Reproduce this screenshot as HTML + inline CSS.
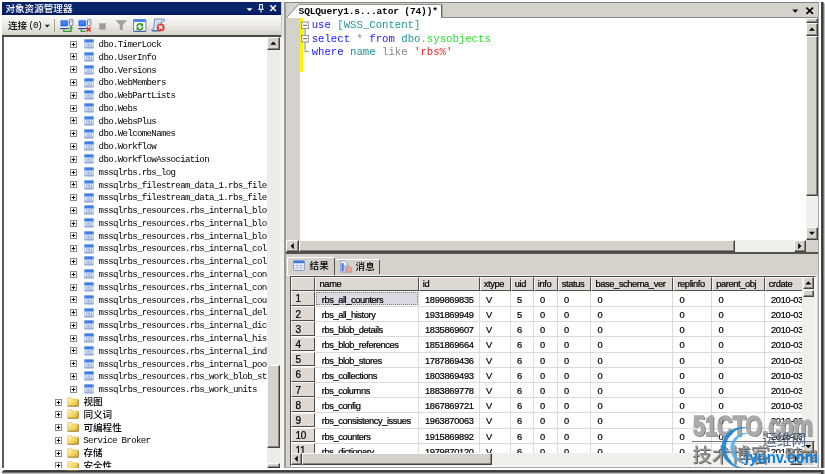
<!DOCTYPE html>
<html lang="zh-CN"><head><meta charset="utf-8"><title>SSMS</title><style>
html,body{margin:0;padding:0;background:#fff;}
#r{filter:blur(0.35px);position:relative;width:825px;height:474px;overflow:hidden;background:#fff;font-family:"Liberation Sans","Noto Sans CJK SC",sans-serif;}
#r div,#r svg,#r span.t{position:absolute;}
#r span.t{white-space:pre;line-height:1;}
.cjk{font-family:"Liberation Sans","Noto Sans CJK SC",sans-serif;font-weight:500;font-size:9.6px;line-height:1.2 !important;}
.mono{font-family:"Liberation Mono",monospace;}
.tree{font-family:"Liberation Mono",monospace;font-size:9.1px;letter-spacing:-0.66px;color:#000;line-height:12px !important;}
.tab{font-family:"Liberation Mono",monospace;font-weight:bold;font-size:9.6px;letter-spacing:-0.19px;color:#000;line-height:11px !important;}
.code{font-family:"Liberation Mono",monospace;font-size:10.67px;color:#000;line-height:13px !important;}
.grid{font-family:"Liberation Sans",sans-serif;font-size:9.3px;color:#000;-webkit-text-stroke:0.22px #000;line-height:11px !important;letter-spacing:-0.1px;}
.wm1{font-family:"Liberation Sans",sans-serif;font-weight:bold;font-size:29.8px;color:#a2a2a2;transform:scaleX(.725);transform-origin:0 0;-webkit-text-stroke:1.7px #a2a2a2;text-shadow:1.6px 1.2px 0 #4a4a4a;opacity:.9;}
.wm2{font-family:"Liberation Sans","Noto Sans CJK SC",sans-serif;font-size:19.5px;color:#8c8c8c;text-shadow:1px 1px 0 #555;opacity:.9;line-height:1.2 !important;}
.wm3{font-family:"Liberation Sans",sans-serif;font-weight:bold;font-size:14.5px;color:#8c8c8c;text-shadow:1px 1px 0 #555;opacity:.85;}
.wm4{font-family:"Liberation Sans","Noto Sans CJK SC",sans-serif;font-size:14.8px;color:#46607f;opacity:.9;line-height:1.2 !important;}
.wm5{font-family:"Liberation Sans",sans-serif;font-weight:bold;font-size:16.4px;color:#0a80e2;transform:scaleX(.915);transform-origin:0 0;}
</style></head><body><div id="r">
<div style="left:2px;top:2px;width:817px;height:466px;background:#d5d2cb;"></div>
<div style="left:2px;top:469.6px;width:823px;height:4.4px;background:linear-gradient(#5a5a5a 0,#2c2c2c 28%,#4f4f4f 52%,#a0a0a0 76%,#dcdcdc 100%);border-radius:3px 0 0 0;"></div>
<div style="left:821.4px;top:2.4px;width:3.6px;height:471.6px;background:linear-gradient(90deg,#5a5a5a 0,#2c2c2c 28%,#4f4f4f 52%,#a0a0a0 76%,#dcdcdc 100%);border-radius:0 3px 0 0;"></div>
<div style="left:2px;top:2px;width:278.6px;height:12.5px;background:linear-gradient(#0a246a 0,#0a246a 75%,#02135c 100%);"></div>
<span class="t cjk" style="left:5.4px;top:3.1px;color:#fff;">对象资源管理器</span>
<svg style="left:244px;top:3px" width="36" height="11" viewBox="0 0 36 11"><path d="M2.5 5.2h6l-3 3z" fill="#fff"/><path d="M15.2 1.5h3.6M15.6 1.5v4.6M18.4 1.5v4.6M14.2 6.3h5.6M17 6.3v3.4" stroke="#fff" stroke-width="1" fill="none"/><path d="M26.3 2.2l5.6 5.8M31.9 2.2l-5.6 5.8" stroke="#fff" stroke-width="1.5" fill="none"/></svg>
<div style="left:2px;top:14.5px;width:278.6px;height:21px;background:linear-gradient(#ffffff 0,#f6f4f1 18%,#ebe9e4 50%,#dcd9d2 82%,#d2cec6 100%);"></div>
<div style="left:2px;top:35.1px;width:278.6px;height:1.5px;background:#484848;"></div>
<span class="t cjk" style="left:8px;top:19.6px;color:#000;">连接</span>
<span class="t mono" style="left:28.5px;top:21.6px;font-size:9px;letter-spacing:-1px;color:#000;">(0)</span>
<svg style="left:44px;top:24px" width="7" height="5" viewBox="0 0 7 5"><path d="M0.7 0.8h5.2l-2.6 2.8z" fill="#222"/></svg>
<div style="left:54px;top:19px;width:1px;height:13px;background:#a7a398;"></div>
<svg style="left:59.5px;top:19px" width="14" height="14" viewBox="0 0 14 14"><rect x="0.5" y="1.2" width="7.6" height="6.4" rx="0.8" fill="#2a6df0" stroke="#9fb6e6" stroke-width="0.5"/><rect x="2" y="2.4" width="4" height="3" fill="#4f8dff" opacity=".8"/><path d="M0.2 7.7h8.2l0.4 1.3h-9z" fill="#f4f2dc"/><path d="M0 9h8.8v1.1h-8.8z" fill="#2a4390"/><rect x="9.5" y="0.4" width="3.4" height="6.2" rx="0.7" fill="#f2f5fb" stroke="#59648a" stroke-width="0.8"/><path d="M10.4 2h1.6M10.4 3.4h1.6" stroke="#8a93b0" stroke-width="0.6"/><path d="M3.8 10.2v2.2h7.3V9" fill="none" stroke="#2f9d2f" stroke-width="1.3"/><path d="M8.9 9.5l2.2-2.7 2.2 2.7z" fill="#2f9d2f"/></svg>
<svg style="left:78.4px;top:19px" width="14" height="14" viewBox="0 0 14 14"><rect x="0.5" y="1.2" width="7.6" height="6.4" rx="0.8" fill="#2a6df0" stroke="#9fb6e6" stroke-width="0.5"/><rect x="2" y="2.4" width="4" height="3" fill="#4f8dff" opacity=".8"/><path d="M0.2 7.7h8.2l0.4 1.3h-9z" fill="#f4f2dc"/><path d="M0 9h8.8v1.1h-8.8z" fill="#2a4390"/><rect x="9.5" y="0.4" width="3.4" height="6.2" rx="0.7" fill="#f2f5fb" stroke="#59648a" stroke-width="0.8"/><path d="M10.4 2h1.6M10.4 3.4h1.6" stroke="#8a93b0" stroke-width="0.6"/><path d="M3.2 10.2v2.2h4.2" fill="none" stroke="#2f9d2f" stroke-width="1.3"/><path d="M8.6 8.2l4 4.2M12.6 8.2l-4 4.2" stroke="#f02a20" stroke-width="1.6"/></svg>
<div style="left:99.3px;top:22.8px;width:6.8px;height:6.8px;background:#9c9a94;border:0.6px solid #b7b5ae;box-sizing:border-box;"></div>
<svg style="left:115px;top:20px" width="13" height="11" viewBox="0 0 13 11"><path d="M0.4 0.3h11.8l-4.4 4.6v5.2h-3V4.9z" fill="#a3a19b"/></svg>
<svg style="left:133px;top:19px" width="14" height="13" viewBox="0 0 14 13"><rect x="0.5" y="0.5" width="12.4" height="11.8" rx="0.6" fill="#fbfdff" stroke="#5677bd" stroke-width="0.9"/><rect x="0.9" y="0.8" width="11.6" height="2.2" fill="#4a84ea"/><path d="M0.5 12.3h12.4" stroke="#3a5690" stroke-width="0.9"/><path d="M3.9 7.6a2.9 2.9 0 0 1 4.9-2" stroke="#2f9420" stroke-width="1.5" fill="none"/><path d="M10.1 4.1v3.1h-3.1z" fill="#2f9420"/><path d="M9.7 7.9a2.9 2.9 0 0 1-4.9 2" stroke="#2f9420" stroke-width="1.5" fill="none"/><path d="M3.5 11.4v-3.1h3.1z" fill="#2f9420"/></svg>
<svg style="left:151px;top:18px" width="15" height="14" viewBox="0 0 15 14"><path d="M3.6 1.1h8.8c1.7 0 1.7 2.2 0 2.2h-1.9l-0.9 8.4c-.1 1-.6 1.5-1.6 1.5h-6.2c-1.6 0-1.6-2.2 0-2.2h1z" fill="#dde7f6" stroke="#6681b6" stroke-width="0.9"/><path d="M1.2 12.6h6.4" stroke="#3f5f99" stroke-width="0.9"/><path d="M5 4.4h3.6M4.8 6h3.6M4.6 7.6h2.6" stroke="#a9bfe4" stroke-width="0.6"/><circle cx="9.7" cy="9.4" r="3.9" fill="#dc3a3c"/><circle cx="8.9" cy="8.4" r="1.8" fill="#ee7a78" opacity=".55"/><path d="M8.1 7.8l3.2 3.2M11.3 7.8l-3.2 3.2" stroke="#fff" stroke-width="1.3"/></svg>
<div style="left:2px;top:36.7px;width:279px;height:431.3px;background:#fff;"></div>
<div style="left:2px;top:36.7px;width:1.6px;height:431.3px;background:#5a5a5a;"></div>
<div style="left:267px;top:37px;width:12.6px;height:431px;background:#eeece8;"></div>
<div style="left:267.4px;top:37px;width:12.2px;height:12.8px;background:#d5d2cb;box-sizing:border-box;border:1px solid;border-color:#fbfaf8 #424242 #424242 #fbfaf8;box-shadow:inset -1px -1px 0 #8a8780;"></div>
<svg style="left:0;top:0" width="825" height="474"><path d="M270.3 44.8h6l-3-3.2z" fill="#000"/></svg>
<div style="left:267.4px;top:365.4px;width:12.2px;height:82.2px;background:#d5d2cb;box-sizing:border-box;border:1px solid;border-color:#fbfaf8 #424242 #424242 #fbfaf8;box-shadow:inset -1px -1px 0 #8a8780;"></div>
<div style="left:267.4px;top:463px;width:12.2px;height:5px;background:#d5d2cb;box-sizing:border-box;border:1px solid;border-color:#fbfaf8 #424242 #424242 #fbfaf8;box-shadow:inset -1px -1px 0 #8a8780;"></div>
<div style="left:279.6px;top:37px;width:4.7px;height:431px;background:#f4f2ef;"></div>
<div style="left:280.6px;top:2px;width:3.7px;height:35px;background:#c9c6bf;"></div>
<div style="left:282.2px;top:2px;width:2px;height:35px;background:#eceae6;"></div>
<svg style="left:69px;top:40px" width="9" height="9" viewBox="0 0 9 9"><rect x="1.5" y="1.5" width="6" height="6" fill="#fff" stroke="#8c8c8c" stroke-width="1"/><path d="M2.7 4.5h3.6M4.5 2.7v3.6" stroke="#000" stroke-width="1"/></svg>
<svg style="left:83.5px;top:39.2px" width="10" height="10" viewBox="0 0 10 10"><rect x="0.3" y="0.3" width="9.4" height="9" rx="0.9" fill="#e4ecf9" stroke="#86a6e4" stroke-width="0.6"/><path d="M0.5 1.2c0-.4.3-.7.7-.7h7.6c.4 0 .7.3.7.7v1.9h-9z" fill="#3f7fe8"/><path d="M0.6 3.1h8.8v0.8h-8.8z" fill="#7fa8ee"/><path d="M2.7 4.2v3.4M4.3 4.2v3.4M5.9 4.2v3.4M7.5 4.2v3.4" stroke="#8fa6d8" stroke-width="0.8"/><rect x="0.6" y="7.5" width="8.8" height="1.6" fill="#93a3c4" opacity=".8"/></svg>
<span class="t tree" style="left:98.6px;top:39.0px;">dbo.TimerLock</span>
<svg style="left:69px;top:52px" width="9" height="9" viewBox="0 0 9 9"><rect x="1.5" y="1.5" width="6" height="6" fill="#fff" stroke="#8c8c8c" stroke-width="1"/><path d="M2.7 4.5h3.6M4.5 2.7v3.6" stroke="#000" stroke-width="1"/></svg>
<svg style="left:83.5px;top:51.98px" width="10" height="10" viewBox="0 0 10 10"><rect x="0.3" y="0.3" width="9.4" height="9" rx="0.9" fill="#e4ecf9" stroke="#86a6e4" stroke-width="0.6"/><path d="M0.5 1.2c0-.4.3-.7.7-.7h7.6c.4 0 .7.3.7.7v1.9h-9z" fill="#3f7fe8"/><path d="M0.6 3.1h8.8v0.8h-8.8z" fill="#7fa8ee"/><path d="M2.7 4.2v3.4M4.3 4.2v3.4M5.9 4.2v3.4M7.5 4.2v3.4" stroke="#8fa6d8" stroke-width="0.8"/><rect x="0.6" y="7.5" width="8.8" height="1.6" fill="#93a3c4" opacity=".8"/></svg>
<span class="t tree" style="left:98.6px;top:51.78px;">dbo.UserInfo</span>
<svg style="left:69px;top:65px" width="9" height="9" viewBox="0 0 9 9"><rect x="1.5" y="1.5" width="6" height="6" fill="#fff" stroke="#8c8c8c" stroke-width="1"/><path d="M2.7 4.5h3.6M4.5 2.7v3.6" stroke="#000" stroke-width="1"/></svg>
<svg style="left:83.5px;top:64.76px" width="10" height="10" viewBox="0 0 10 10"><rect x="0.3" y="0.3" width="9.4" height="9" rx="0.9" fill="#e4ecf9" stroke="#86a6e4" stroke-width="0.6"/><path d="M0.5 1.2c0-.4.3-.7.7-.7h7.6c.4 0 .7.3.7.7v1.9h-9z" fill="#3f7fe8"/><path d="M0.6 3.1h8.8v0.8h-8.8z" fill="#7fa8ee"/><path d="M2.7 4.2v3.4M4.3 4.2v3.4M5.9 4.2v3.4M7.5 4.2v3.4" stroke="#8fa6d8" stroke-width="0.8"/><rect x="0.6" y="7.5" width="8.8" height="1.6" fill="#93a3c4" opacity=".8"/></svg>
<span class="t tree" style="left:98.6px;top:64.56px;">dbo.Versions</span>
<svg style="left:69px;top:78px" width="9" height="9" viewBox="0 0 9 9"><rect x="1.5" y="1.5" width="6" height="6" fill="#fff" stroke="#8c8c8c" stroke-width="1"/><path d="M2.7 4.5h3.6M4.5 2.7v3.6" stroke="#000" stroke-width="1"/></svg>
<svg style="left:83.5px;top:77.54px" width="10" height="10" viewBox="0 0 10 10"><rect x="0.3" y="0.3" width="9.4" height="9" rx="0.9" fill="#e4ecf9" stroke="#86a6e4" stroke-width="0.6"/><path d="M0.5 1.2c0-.4.3-.7.7-.7h7.6c.4 0 .7.3.7.7v1.9h-9z" fill="#3f7fe8"/><path d="M0.6 3.1h8.8v0.8h-8.8z" fill="#7fa8ee"/><path d="M2.7 4.2v3.4M4.3 4.2v3.4M5.9 4.2v3.4M7.5 4.2v3.4" stroke="#8fa6d8" stroke-width="0.8"/><rect x="0.6" y="7.5" width="8.8" height="1.6" fill="#93a3c4" opacity=".8"/></svg>
<span class="t tree" style="left:98.6px;top:77.34px;">dbo.WebMembers</span>
<svg style="left:69px;top:91px" width="9" height="9" viewBox="0 0 9 9"><rect x="1.5" y="1.5" width="6" height="6" fill="#fff" stroke="#8c8c8c" stroke-width="1"/><path d="M2.7 4.5h3.6M4.5 2.7v3.6" stroke="#000" stroke-width="1"/></svg>
<svg style="left:83.5px;top:90.32px" width="10" height="10" viewBox="0 0 10 10"><rect x="0.3" y="0.3" width="9.4" height="9" rx="0.9" fill="#e4ecf9" stroke="#86a6e4" stroke-width="0.6"/><path d="M0.5 1.2c0-.4.3-.7.7-.7h7.6c.4 0 .7.3.7.7v1.9h-9z" fill="#3f7fe8"/><path d="M0.6 3.1h8.8v0.8h-8.8z" fill="#7fa8ee"/><path d="M2.7 4.2v3.4M4.3 4.2v3.4M5.9 4.2v3.4M7.5 4.2v3.4" stroke="#8fa6d8" stroke-width="0.8"/><rect x="0.6" y="7.5" width="8.8" height="1.6" fill="#93a3c4" opacity=".8"/></svg>
<span class="t tree" style="left:98.6px;top:90.12px;">dbo.WebPartLists</span>
<svg style="left:69px;top:104px" width="9" height="9" viewBox="0 0 9 9"><rect x="1.5" y="1.5" width="6" height="6" fill="#fff" stroke="#8c8c8c" stroke-width="1"/><path d="M2.7 4.5h3.6M4.5 2.7v3.6" stroke="#000" stroke-width="1"/></svg>
<svg style="left:83.5px;top:103.1px" width="10" height="10" viewBox="0 0 10 10"><rect x="0.3" y="0.3" width="9.4" height="9" rx="0.9" fill="#e4ecf9" stroke="#86a6e4" stroke-width="0.6"/><path d="M0.5 1.2c0-.4.3-.7.7-.7h7.6c.4 0 .7.3.7.7v1.9h-9z" fill="#3f7fe8"/><path d="M0.6 3.1h8.8v0.8h-8.8z" fill="#7fa8ee"/><path d="M2.7 4.2v3.4M4.3 4.2v3.4M5.9 4.2v3.4M7.5 4.2v3.4" stroke="#8fa6d8" stroke-width="0.8"/><rect x="0.6" y="7.5" width="8.8" height="1.6" fill="#93a3c4" opacity=".8"/></svg>
<span class="t tree" style="left:98.6px;top:102.9px;">dbo.Webs</span>
<svg style="left:69px;top:116px" width="9" height="9" viewBox="0 0 9 9"><rect x="1.5" y="1.5" width="6" height="6" fill="#fff" stroke="#8c8c8c" stroke-width="1"/><path d="M2.7 4.5h3.6M4.5 2.7v3.6" stroke="#000" stroke-width="1"/></svg>
<svg style="left:83.5px;top:115.88px" width="10" height="10" viewBox="0 0 10 10"><rect x="0.3" y="0.3" width="9.4" height="9" rx="0.9" fill="#e4ecf9" stroke="#86a6e4" stroke-width="0.6"/><path d="M0.5 1.2c0-.4.3-.7.7-.7h7.6c.4 0 .7.3.7.7v1.9h-9z" fill="#3f7fe8"/><path d="M0.6 3.1h8.8v0.8h-8.8z" fill="#7fa8ee"/><path d="M2.7 4.2v3.4M4.3 4.2v3.4M5.9 4.2v3.4M7.5 4.2v3.4" stroke="#8fa6d8" stroke-width="0.8"/><rect x="0.6" y="7.5" width="8.8" height="1.6" fill="#93a3c4" opacity=".8"/></svg>
<span class="t tree" style="left:98.6px;top:115.68px;">dbo.WebsPlus</span>
<svg style="left:69px;top:129px" width="9" height="9" viewBox="0 0 9 9"><rect x="1.5" y="1.5" width="6" height="6" fill="#fff" stroke="#8c8c8c" stroke-width="1"/><path d="M2.7 4.5h3.6M4.5 2.7v3.6" stroke="#000" stroke-width="1"/></svg>
<svg style="left:83.5px;top:128.66px" width="10" height="10" viewBox="0 0 10 10"><rect x="0.3" y="0.3" width="9.4" height="9" rx="0.9" fill="#e4ecf9" stroke="#86a6e4" stroke-width="0.6"/><path d="M0.5 1.2c0-.4.3-.7.7-.7h7.6c.4 0 .7.3.7.7v1.9h-9z" fill="#3f7fe8"/><path d="M0.6 3.1h8.8v0.8h-8.8z" fill="#7fa8ee"/><path d="M2.7 4.2v3.4M4.3 4.2v3.4M5.9 4.2v3.4M7.5 4.2v3.4" stroke="#8fa6d8" stroke-width="0.8"/><rect x="0.6" y="7.5" width="8.8" height="1.6" fill="#93a3c4" opacity=".8"/></svg>
<span class="t tree" style="left:98.6px;top:128.46px;">dbo.WelcomeNames</span>
<svg style="left:69px;top:142px" width="9" height="9" viewBox="0 0 9 9"><rect x="1.5" y="1.5" width="6" height="6" fill="#fff" stroke="#8c8c8c" stroke-width="1"/><path d="M2.7 4.5h3.6M4.5 2.7v3.6" stroke="#000" stroke-width="1"/></svg>
<svg style="left:83.5px;top:141.44px" width="10" height="10" viewBox="0 0 10 10"><rect x="0.3" y="0.3" width="9.4" height="9" rx="0.9" fill="#e4ecf9" stroke="#86a6e4" stroke-width="0.6"/><path d="M0.5 1.2c0-.4.3-.7.7-.7h7.6c.4 0 .7.3.7.7v1.9h-9z" fill="#3f7fe8"/><path d="M0.6 3.1h8.8v0.8h-8.8z" fill="#7fa8ee"/><path d="M2.7 4.2v3.4M4.3 4.2v3.4M5.9 4.2v3.4M7.5 4.2v3.4" stroke="#8fa6d8" stroke-width="0.8"/><rect x="0.6" y="7.5" width="8.8" height="1.6" fill="#93a3c4" opacity=".8"/></svg>
<span class="t tree" style="left:98.6px;top:141.24px;">dbo.Workflow</span>
<svg style="left:69px;top:155px" width="9" height="9" viewBox="0 0 9 9"><rect x="1.5" y="1.5" width="6" height="6" fill="#fff" stroke="#8c8c8c" stroke-width="1"/><path d="M2.7 4.5h3.6M4.5 2.7v3.6" stroke="#000" stroke-width="1"/></svg>
<svg style="left:83.5px;top:154.22px" width="10" height="10" viewBox="0 0 10 10"><rect x="0.3" y="0.3" width="9.4" height="9" rx="0.9" fill="#e4ecf9" stroke="#86a6e4" stroke-width="0.6"/><path d="M0.5 1.2c0-.4.3-.7.7-.7h7.6c.4 0 .7.3.7.7v1.9h-9z" fill="#3f7fe8"/><path d="M0.6 3.1h8.8v0.8h-8.8z" fill="#7fa8ee"/><path d="M2.7 4.2v3.4M4.3 4.2v3.4M5.9 4.2v3.4M7.5 4.2v3.4" stroke="#8fa6d8" stroke-width="0.8"/><rect x="0.6" y="7.5" width="8.8" height="1.6" fill="#93a3c4" opacity=".8"/></svg>
<span class="t tree" style="left:98.6px;top:154.02px;">dbo.WorkflowAssociation</span>
<svg style="left:69px;top:168px" width="9" height="9" viewBox="0 0 9 9"><rect x="1.5" y="1.5" width="6" height="6" fill="#fff" stroke="#8c8c8c" stroke-width="1"/><path d="M2.7 4.5h3.6M4.5 2.7v3.6" stroke="#000" stroke-width="1"/></svg>
<svg style="left:83.5px;top:167.0px" width="10" height="10" viewBox="0 0 10 10"><rect x="0.3" y="0.3" width="9.4" height="9" rx="0.9" fill="#e4ecf9" stroke="#86a6e4" stroke-width="0.6"/><path d="M0.5 1.2c0-.4.3-.7.7-.7h7.6c.4 0 .7.3.7.7v1.9h-9z" fill="#3f7fe8"/><path d="M0.6 3.1h8.8v0.8h-8.8z" fill="#7fa8ee"/><path d="M2.7 4.2v3.4M4.3 4.2v3.4M5.9 4.2v3.4M7.5 4.2v3.4" stroke="#8fa6d8" stroke-width="0.8"/><rect x="0.6" y="7.5" width="8.8" height="1.6" fill="#93a3c4" opacity=".8"/></svg>
<span class="t tree" style="left:98.6px;top:166.8px;">mssqlrbs.rbs_log</span>
<svg style="left:69px;top:180px" width="9" height="9" viewBox="0 0 9 9"><rect x="1.5" y="1.5" width="6" height="6" fill="#fff" stroke="#8c8c8c" stroke-width="1"/><path d="M2.7 4.5h3.6M4.5 2.7v3.6" stroke="#000" stroke-width="1"/></svg>
<svg style="left:83.5px;top:179.78px" width="10" height="10" viewBox="0 0 10 10"><rect x="0.3" y="0.3" width="9.4" height="9" rx="0.9" fill="#e4ecf9" stroke="#86a6e4" stroke-width="0.6"/><path d="M0.5 1.2c0-.4.3-.7.7-.7h7.6c.4 0 .7.3.7.7v1.9h-9z" fill="#3f7fe8"/><path d="M0.6 3.1h8.8v0.8h-8.8z" fill="#7fa8ee"/><path d="M2.7 4.2v3.4M4.3 4.2v3.4M5.9 4.2v3.4M7.5 4.2v3.4" stroke="#8fa6d8" stroke-width="0.8"/><rect x="0.6" y="7.5" width="8.8" height="1.6" fill="#93a3c4" opacity=".8"/></svg>
<span class="t tree" style="left:98.6px;top:179.58px;">mssqlrbs_filestream_data_1.rbs_file</span>
<svg style="left:69px;top:193px" width="9" height="9" viewBox="0 0 9 9"><rect x="1.5" y="1.5" width="6" height="6" fill="#fff" stroke="#8c8c8c" stroke-width="1"/><path d="M2.7 4.5h3.6M4.5 2.7v3.6" stroke="#000" stroke-width="1"/></svg>
<svg style="left:83.5px;top:192.56px" width="10" height="10" viewBox="0 0 10 10"><rect x="0.3" y="0.3" width="9.4" height="9" rx="0.9" fill="#e4ecf9" stroke="#86a6e4" stroke-width="0.6"/><path d="M0.5 1.2c0-.4.3-.7.7-.7h7.6c.4 0 .7.3.7.7v1.9h-9z" fill="#3f7fe8"/><path d="M0.6 3.1h8.8v0.8h-8.8z" fill="#7fa8ee"/><path d="M2.7 4.2v3.4M4.3 4.2v3.4M5.9 4.2v3.4M7.5 4.2v3.4" stroke="#8fa6d8" stroke-width="0.8"/><rect x="0.6" y="7.5" width="8.8" height="1.6" fill="#93a3c4" opacity=".8"/></svg>
<span class="t tree" style="left:98.6px;top:192.36px;">mssqlrbs_filestream_data_1.rbs_file</span>
<svg style="left:69px;top:206px" width="9" height="9" viewBox="0 0 9 9"><rect x="1.5" y="1.5" width="6" height="6" fill="#fff" stroke="#8c8c8c" stroke-width="1"/><path d="M2.7 4.5h3.6M4.5 2.7v3.6" stroke="#000" stroke-width="1"/></svg>
<svg style="left:83.5px;top:205.34px" width="10" height="10" viewBox="0 0 10 10"><rect x="0.3" y="0.3" width="9.4" height="9" rx="0.9" fill="#e4ecf9" stroke="#86a6e4" stroke-width="0.6"/><path d="M0.5 1.2c0-.4.3-.7.7-.7h7.6c.4 0 .7.3.7.7v1.9h-9z" fill="#3f7fe8"/><path d="M0.6 3.1h8.8v0.8h-8.8z" fill="#7fa8ee"/><path d="M2.7 4.2v3.4M4.3 4.2v3.4M5.9 4.2v3.4M7.5 4.2v3.4" stroke="#8fa6d8" stroke-width="0.8"/><rect x="0.6" y="7.5" width="8.8" height="1.6" fill="#93a3c4" opacity=".8"/></svg>
<span class="t tree" style="left:98.6px;top:205.14px;">mssqlrbs_resources.rbs_internal_blo</span>
<svg style="left:69px;top:219px" width="9" height="9" viewBox="0 0 9 9"><rect x="1.5" y="1.5" width="6" height="6" fill="#fff" stroke="#8c8c8c" stroke-width="1"/><path d="M2.7 4.5h3.6M4.5 2.7v3.6" stroke="#000" stroke-width="1"/></svg>
<svg style="left:83.5px;top:218.12px" width="10" height="10" viewBox="0 0 10 10"><rect x="0.3" y="0.3" width="9.4" height="9" rx="0.9" fill="#e4ecf9" stroke="#86a6e4" stroke-width="0.6"/><path d="M0.5 1.2c0-.4.3-.7.7-.7h7.6c.4 0 .7.3.7.7v1.9h-9z" fill="#3f7fe8"/><path d="M0.6 3.1h8.8v0.8h-8.8z" fill="#7fa8ee"/><path d="M2.7 4.2v3.4M4.3 4.2v3.4M5.9 4.2v3.4M7.5 4.2v3.4" stroke="#8fa6d8" stroke-width="0.8"/><rect x="0.6" y="7.5" width="8.8" height="1.6" fill="#93a3c4" opacity=".8"/></svg>
<span class="t tree" style="left:98.6px;top:217.92px;">mssqlrbs_resources.rbs_internal_blo</span>
<svg style="left:69px;top:231px" width="9" height="9" viewBox="0 0 9 9"><rect x="1.5" y="1.5" width="6" height="6" fill="#fff" stroke="#8c8c8c" stroke-width="1"/><path d="M2.7 4.5h3.6M4.5 2.7v3.6" stroke="#000" stroke-width="1"/></svg>
<svg style="left:83.5px;top:230.9px" width="10" height="10" viewBox="0 0 10 10"><rect x="0.3" y="0.3" width="9.4" height="9" rx="0.9" fill="#e4ecf9" stroke="#86a6e4" stroke-width="0.6"/><path d="M0.5 1.2c0-.4.3-.7.7-.7h7.6c.4 0 .7.3.7.7v1.9h-9z" fill="#3f7fe8"/><path d="M0.6 3.1h8.8v0.8h-8.8z" fill="#7fa8ee"/><path d="M2.7 4.2v3.4M4.3 4.2v3.4M5.9 4.2v3.4M7.5 4.2v3.4" stroke="#8fa6d8" stroke-width="0.8"/><rect x="0.6" y="7.5" width="8.8" height="1.6" fill="#93a3c4" opacity=".8"/></svg>
<span class="t tree" style="left:98.6px;top:230.7px;">mssqlrbs_resources.rbs_internal_blo</span>
<svg style="left:69px;top:244px" width="9" height="9" viewBox="0 0 9 9"><rect x="1.5" y="1.5" width="6" height="6" fill="#fff" stroke="#8c8c8c" stroke-width="1"/><path d="M2.7 4.5h3.6M4.5 2.7v3.6" stroke="#000" stroke-width="1"/></svg>
<svg style="left:83.5px;top:243.68px" width="10" height="10" viewBox="0 0 10 10"><rect x="0.3" y="0.3" width="9.4" height="9" rx="0.9" fill="#e4ecf9" stroke="#86a6e4" stroke-width="0.6"/><path d="M0.5 1.2c0-.4.3-.7.7-.7h7.6c.4 0 .7.3.7.7v1.9h-9z" fill="#3f7fe8"/><path d="M0.6 3.1h8.8v0.8h-8.8z" fill="#7fa8ee"/><path d="M2.7 4.2v3.4M4.3 4.2v3.4M5.9 4.2v3.4M7.5 4.2v3.4" stroke="#8fa6d8" stroke-width="0.8"/><rect x="0.6" y="7.5" width="8.8" height="1.6" fill="#93a3c4" opacity=".8"/></svg>
<span class="t tree" style="left:98.6px;top:243.48px;">mssqlrbs_resources.rbs_internal_col</span>
<svg style="left:69px;top:257px" width="9" height="9" viewBox="0 0 9 9"><rect x="1.5" y="1.5" width="6" height="6" fill="#fff" stroke="#8c8c8c" stroke-width="1"/><path d="M2.7 4.5h3.6M4.5 2.7v3.6" stroke="#000" stroke-width="1"/></svg>
<svg style="left:83.5px;top:256.46px" width="10" height="10" viewBox="0 0 10 10"><rect x="0.3" y="0.3" width="9.4" height="9" rx="0.9" fill="#e4ecf9" stroke="#86a6e4" stroke-width="0.6"/><path d="M0.5 1.2c0-.4.3-.7.7-.7h7.6c.4 0 .7.3.7.7v1.9h-9z" fill="#3f7fe8"/><path d="M0.6 3.1h8.8v0.8h-8.8z" fill="#7fa8ee"/><path d="M2.7 4.2v3.4M4.3 4.2v3.4M5.9 4.2v3.4M7.5 4.2v3.4" stroke="#8fa6d8" stroke-width="0.8"/><rect x="0.6" y="7.5" width="8.8" height="1.6" fill="#93a3c4" opacity=".8"/></svg>
<span class="t tree" style="left:98.6px;top:256.26px;">mssqlrbs_resources.rbs_internal_col</span>
<svg style="left:69px;top:270px" width="9" height="9" viewBox="0 0 9 9"><rect x="1.5" y="1.5" width="6" height="6" fill="#fff" stroke="#8c8c8c" stroke-width="1"/><path d="M2.7 4.5h3.6M4.5 2.7v3.6" stroke="#000" stroke-width="1"/></svg>
<svg style="left:83.5px;top:269.24px" width="10" height="10" viewBox="0 0 10 10"><rect x="0.3" y="0.3" width="9.4" height="9" rx="0.9" fill="#e4ecf9" stroke="#86a6e4" stroke-width="0.6"/><path d="M0.5 1.2c0-.4.3-.7.7-.7h7.6c.4 0 .7.3.7.7v1.9h-9z" fill="#3f7fe8"/><path d="M0.6 3.1h8.8v0.8h-8.8z" fill="#7fa8ee"/><path d="M2.7 4.2v3.4M4.3 4.2v3.4M5.9 4.2v3.4M7.5 4.2v3.4" stroke="#8fa6d8" stroke-width="0.8"/><rect x="0.6" y="7.5" width="8.8" height="1.6" fill="#93a3c4" opacity=".8"/></svg>
<span class="t tree" style="left:98.6px;top:269.04px;">mssqlrbs_resources.rbs_internal_con</span>
<svg style="left:69px;top:283px" width="9" height="9" viewBox="0 0 9 9"><rect x="1.5" y="1.5" width="6" height="6" fill="#fff" stroke="#8c8c8c" stroke-width="1"/><path d="M2.7 4.5h3.6M4.5 2.7v3.6" stroke="#000" stroke-width="1"/></svg>
<svg style="left:83.5px;top:282.02px" width="10" height="10" viewBox="0 0 10 10"><rect x="0.3" y="0.3" width="9.4" height="9" rx="0.9" fill="#e4ecf9" stroke="#86a6e4" stroke-width="0.6"/><path d="M0.5 1.2c0-.4.3-.7.7-.7h7.6c.4 0 .7.3.7.7v1.9h-9z" fill="#3f7fe8"/><path d="M0.6 3.1h8.8v0.8h-8.8z" fill="#7fa8ee"/><path d="M2.7 4.2v3.4M4.3 4.2v3.4M5.9 4.2v3.4M7.5 4.2v3.4" stroke="#8fa6d8" stroke-width="0.8"/><rect x="0.6" y="7.5" width="8.8" height="1.6" fill="#93a3c4" opacity=".8"/></svg>
<span class="t tree" style="left:98.6px;top:281.82px;">mssqlrbs_resources.rbs_internal_con</span>
<svg style="left:69px;top:295px" width="9" height="9" viewBox="0 0 9 9"><rect x="1.5" y="1.5" width="6" height="6" fill="#fff" stroke="#8c8c8c" stroke-width="1"/><path d="M2.7 4.5h3.6M4.5 2.7v3.6" stroke="#000" stroke-width="1"/></svg>
<svg style="left:83.5px;top:294.8px" width="10" height="10" viewBox="0 0 10 10"><rect x="0.3" y="0.3" width="9.4" height="9" rx="0.9" fill="#e4ecf9" stroke="#86a6e4" stroke-width="0.6"/><path d="M0.5 1.2c0-.4.3-.7.7-.7h7.6c.4 0 .7.3.7.7v1.9h-9z" fill="#3f7fe8"/><path d="M0.6 3.1h8.8v0.8h-8.8z" fill="#7fa8ee"/><path d="M2.7 4.2v3.4M4.3 4.2v3.4M5.9 4.2v3.4M7.5 4.2v3.4" stroke="#8fa6d8" stroke-width="0.8"/><rect x="0.6" y="7.5" width="8.8" height="1.6" fill="#93a3c4" opacity=".8"/></svg>
<span class="t tree" style="left:98.6px;top:294.6px;">mssqlrbs_resources.rbs_internal_cou</span>
<svg style="left:69px;top:308px" width="9" height="9" viewBox="0 0 9 9"><rect x="1.5" y="1.5" width="6" height="6" fill="#fff" stroke="#8c8c8c" stroke-width="1"/><path d="M2.7 4.5h3.6M4.5 2.7v3.6" stroke="#000" stroke-width="1"/></svg>
<svg style="left:83.5px;top:307.58px" width="10" height="10" viewBox="0 0 10 10"><rect x="0.3" y="0.3" width="9.4" height="9" rx="0.9" fill="#e4ecf9" stroke="#86a6e4" stroke-width="0.6"/><path d="M0.5 1.2c0-.4.3-.7.7-.7h7.6c.4 0 .7.3.7.7v1.9h-9z" fill="#3f7fe8"/><path d="M0.6 3.1h8.8v0.8h-8.8z" fill="#7fa8ee"/><path d="M2.7 4.2v3.4M4.3 4.2v3.4M5.9 4.2v3.4M7.5 4.2v3.4" stroke="#8fa6d8" stroke-width="0.8"/><rect x="0.6" y="7.5" width="8.8" height="1.6" fill="#93a3c4" opacity=".8"/></svg>
<span class="t tree" style="left:98.6px;top:307.38px;">mssqlrbs_resources.rbs_internal_del</span>
<svg style="left:69px;top:321px" width="9" height="9" viewBox="0 0 9 9"><rect x="1.5" y="1.5" width="6" height="6" fill="#fff" stroke="#8c8c8c" stroke-width="1"/><path d="M2.7 4.5h3.6M4.5 2.7v3.6" stroke="#000" stroke-width="1"/></svg>
<svg style="left:83.5px;top:320.36px" width="10" height="10" viewBox="0 0 10 10"><rect x="0.3" y="0.3" width="9.4" height="9" rx="0.9" fill="#e4ecf9" stroke="#86a6e4" stroke-width="0.6"/><path d="M0.5 1.2c0-.4.3-.7.7-.7h7.6c.4 0 .7.3.7.7v1.9h-9z" fill="#3f7fe8"/><path d="M0.6 3.1h8.8v0.8h-8.8z" fill="#7fa8ee"/><path d="M2.7 4.2v3.4M4.3 4.2v3.4M5.9 4.2v3.4M7.5 4.2v3.4" stroke="#8fa6d8" stroke-width="0.8"/><rect x="0.6" y="7.5" width="8.8" height="1.6" fill="#93a3c4" opacity=".8"/></svg>
<span class="t tree" style="left:98.6px;top:320.16px;">mssqlrbs_resources.rbs_internal_dic</span>
<svg style="left:69px;top:334px" width="9" height="9" viewBox="0 0 9 9"><rect x="1.5" y="1.5" width="6" height="6" fill="#fff" stroke="#8c8c8c" stroke-width="1"/><path d="M2.7 4.5h3.6M4.5 2.7v3.6" stroke="#000" stroke-width="1"/></svg>
<svg style="left:83.5px;top:333.14px" width="10" height="10" viewBox="0 0 10 10"><rect x="0.3" y="0.3" width="9.4" height="9" rx="0.9" fill="#e4ecf9" stroke="#86a6e4" stroke-width="0.6"/><path d="M0.5 1.2c0-.4.3-.7.7-.7h7.6c.4 0 .7.3.7.7v1.9h-9z" fill="#3f7fe8"/><path d="M0.6 3.1h8.8v0.8h-8.8z" fill="#7fa8ee"/><path d="M2.7 4.2v3.4M4.3 4.2v3.4M5.9 4.2v3.4M7.5 4.2v3.4" stroke="#8fa6d8" stroke-width="0.8"/><rect x="0.6" y="7.5" width="8.8" height="1.6" fill="#93a3c4" opacity=".8"/></svg>
<span class="t tree" style="left:98.6px;top:332.94px;">mssqlrbs_resources.rbs_internal_his</span>
<svg style="left:69px;top:346px" width="9" height="9" viewBox="0 0 9 9"><rect x="1.5" y="1.5" width="6" height="6" fill="#fff" stroke="#8c8c8c" stroke-width="1"/><path d="M2.7 4.5h3.6M4.5 2.7v3.6" stroke="#000" stroke-width="1"/></svg>
<svg style="left:83.5px;top:345.92px" width="10" height="10" viewBox="0 0 10 10"><rect x="0.3" y="0.3" width="9.4" height="9" rx="0.9" fill="#e4ecf9" stroke="#86a6e4" stroke-width="0.6"/><path d="M0.5 1.2c0-.4.3-.7.7-.7h7.6c.4 0 .7.3.7.7v1.9h-9z" fill="#3f7fe8"/><path d="M0.6 3.1h8.8v0.8h-8.8z" fill="#7fa8ee"/><path d="M2.7 4.2v3.4M4.3 4.2v3.4M5.9 4.2v3.4M7.5 4.2v3.4" stroke="#8fa6d8" stroke-width="0.8"/><rect x="0.6" y="7.5" width="8.8" height="1.6" fill="#93a3c4" opacity=".8"/></svg>
<span class="t tree" style="left:98.6px;top:345.72px;">mssqlrbs_resources.rbs_internal_ind</span>
<svg style="left:69px;top:359px" width="9" height="9" viewBox="0 0 9 9"><rect x="1.5" y="1.5" width="6" height="6" fill="#fff" stroke="#8c8c8c" stroke-width="1"/><path d="M2.7 4.5h3.6M4.5 2.7v3.6" stroke="#000" stroke-width="1"/></svg>
<svg style="left:83.5px;top:358.7px" width="10" height="10" viewBox="0 0 10 10"><rect x="0.3" y="0.3" width="9.4" height="9" rx="0.9" fill="#e4ecf9" stroke="#86a6e4" stroke-width="0.6"/><path d="M0.5 1.2c0-.4.3-.7.7-.7h7.6c.4 0 .7.3.7.7v1.9h-9z" fill="#3f7fe8"/><path d="M0.6 3.1h8.8v0.8h-8.8z" fill="#7fa8ee"/><path d="M2.7 4.2v3.4M4.3 4.2v3.4M5.9 4.2v3.4M7.5 4.2v3.4" stroke="#8fa6d8" stroke-width="0.8"/><rect x="0.6" y="7.5" width="8.8" height="1.6" fill="#93a3c4" opacity=".8"/></svg>
<span class="t tree" style="left:98.6px;top:358.5px;">mssqlrbs_resources.rbs_internal_poo</span>
<svg style="left:69px;top:372px" width="9" height="9" viewBox="0 0 9 9"><rect x="1.5" y="1.5" width="6" height="6" fill="#fff" stroke="#8c8c8c" stroke-width="1"/><path d="M2.7 4.5h3.6M4.5 2.7v3.6" stroke="#000" stroke-width="1"/></svg>
<svg style="left:83.5px;top:371.48px" width="10" height="10" viewBox="0 0 10 10"><rect x="0.3" y="0.3" width="9.4" height="9" rx="0.9" fill="#e4ecf9" stroke="#86a6e4" stroke-width="0.6"/><path d="M0.5 1.2c0-.4.3-.7.7-.7h7.6c.4 0 .7.3.7.7v1.9h-9z" fill="#3f7fe8"/><path d="M0.6 3.1h8.8v0.8h-8.8z" fill="#7fa8ee"/><path d="M2.7 4.2v3.4M4.3 4.2v3.4M5.9 4.2v3.4M7.5 4.2v3.4" stroke="#8fa6d8" stroke-width="0.8"/><rect x="0.6" y="7.5" width="8.8" height="1.6" fill="#93a3c4" opacity=".8"/></svg>
<span class="t tree" style="left:98.6px;top:371.28px;">mssqlrbs_resources.rbs_work_blob_st</span>
<svg style="left:69px;top:385px" width="9" height="9" viewBox="0 0 9 9"><rect x="1.5" y="1.5" width="6" height="6" fill="#fff" stroke="#8c8c8c" stroke-width="1"/><path d="M2.7 4.5h3.6M4.5 2.7v3.6" stroke="#000" stroke-width="1"/></svg>
<svg style="left:83.5px;top:384.26px" width="10" height="10" viewBox="0 0 10 10"><rect x="0.3" y="0.3" width="9.4" height="9" rx="0.9" fill="#e4ecf9" stroke="#86a6e4" stroke-width="0.6"/><path d="M0.5 1.2c0-.4.3-.7.7-.7h7.6c.4 0 .7.3.7.7v1.9h-9z" fill="#3f7fe8"/><path d="M0.6 3.1h8.8v0.8h-8.8z" fill="#7fa8ee"/><path d="M2.7 4.2v3.4M4.3 4.2v3.4M5.9 4.2v3.4M7.5 4.2v3.4" stroke="#8fa6d8" stroke-width="0.8"/><rect x="0.6" y="7.5" width="8.8" height="1.6" fill="#93a3c4" opacity=".8"/></svg>
<span class="t tree" style="left:98.6px;top:384.06px;">mssqlrbs_resources.rbs_work_units</span>
<svg style="left:54px;top:398px" width="9" height="9" viewBox="0 0 9 9"><rect x="1.5" y="1.5" width="6" height="6" fill="#fff" stroke="#8c8c8c" stroke-width="1"/><path d="M2.7 4.5h3.6M4.5 2.7v3.6" stroke="#000" stroke-width="1"/></svg>
<svg style="left:67px;top:396.64px" width="12" height="10" viewBox="0 0 12 10"><defs><linearGradient id="fg" x1="0" y1="0" x2="1" y2="1"><stop offset="0" stop-color="#fff6c0"/><stop offset="0.55" stop-color="#f6d560"/><stop offset="1" stop-color="#dfa826"/></linearGradient></defs><path d="M0.4 1.5c0-.6.4-1 1-1h2.6c.5 0 .8.2 1 .6l.4.8h5c.6 0 1 .4 1 1v5.7c0 .4-.3.7-.7.7h-9.6c-.4 0-.7-.3-.7-.7z" fill="url(#fg)" stroke="#d9b040" stroke-width="0.5"/><path d="M0.5 9.2h10.8M11.3 2.6v6.6" stroke="#7a6124" stroke-width="0.8" fill="none" opacity=".85"/></svg>
<span class="t cjk" style="left:83.4px;top:396.34px;color:#000;">视图</span>
<svg style="left:54px;top:410px" width="9" height="9" viewBox="0 0 9 9"><rect x="1.5" y="1.5" width="6" height="6" fill="#fff" stroke="#8c8c8c" stroke-width="1"/><path d="M2.7 4.5h3.6M4.5 2.7v3.6" stroke="#000" stroke-width="1"/></svg>
<svg style="left:67px;top:409.42px" width="12" height="10" viewBox="0 0 12 10"><defs><linearGradient id="fg" x1="0" y1="0" x2="1" y2="1"><stop offset="0" stop-color="#fff6c0"/><stop offset="0.55" stop-color="#f6d560"/><stop offset="1" stop-color="#dfa826"/></linearGradient></defs><path d="M0.4 1.5c0-.6.4-1 1-1h2.6c.5 0 .8.2 1 .6l.4.8h5c.6 0 1 .4 1 1v5.7c0 .4-.3.7-.7.7h-9.6c-.4 0-.7-.3-.7-.7z" fill="url(#fg)" stroke="#d9b040" stroke-width="0.5"/><path d="M0.5 9.2h10.8M11.3 2.6v6.6" stroke="#7a6124" stroke-width="0.8" fill="none" opacity=".85"/></svg>
<span class="t cjk" style="left:83.4px;top:409.12px;color:#000;">同义词</span>
<svg style="left:54px;top:423px" width="9" height="9" viewBox="0 0 9 9"><rect x="1.5" y="1.5" width="6" height="6" fill="#fff" stroke="#8c8c8c" stroke-width="1"/><path d="M2.7 4.5h3.6M4.5 2.7v3.6" stroke="#000" stroke-width="1"/></svg>
<svg style="left:67px;top:422.2px" width="12" height="10" viewBox="0 0 12 10"><defs><linearGradient id="fg" x1="0" y1="0" x2="1" y2="1"><stop offset="0" stop-color="#fff6c0"/><stop offset="0.55" stop-color="#f6d560"/><stop offset="1" stop-color="#dfa826"/></linearGradient></defs><path d="M0.4 1.5c0-.6.4-1 1-1h2.6c.5 0 .8.2 1 .6l.4.8h5c.6 0 1 .4 1 1v5.7c0 .4-.3.7-.7.7h-9.6c-.4 0-.7-.3-.7-.7z" fill="url(#fg)" stroke="#d9b040" stroke-width="0.5"/><path d="M0.5 9.2h10.8M11.3 2.6v6.6" stroke="#7a6124" stroke-width="0.8" fill="none" opacity=".85"/></svg>
<span class="t cjk" style="left:83.4px;top:421.9px;color:#000;">可编程性</span>
<svg style="left:54px;top:436px" width="9" height="9" viewBox="0 0 9 9"><rect x="1.5" y="1.5" width="6" height="6" fill="#fff" stroke="#8c8c8c" stroke-width="1"/><path d="M2.7 4.5h3.6M4.5 2.7v3.6" stroke="#000" stroke-width="1"/></svg>
<svg style="left:67px;top:434.98px" width="12" height="10" viewBox="0 0 12 10"><defs><linearGradient id="fg" x1="0" y1="0" x2="1" y2="1"><stop offset="0" stop-color="#fff6c0"/><stop offset="0.55" stop-color="#f6d560"/><stop offset="1" stop-color="#dfa826"/></linearGradient></defs><path d="M0.4 1.5c0-.6.4-1 1-1h2.6c.5 0 .8.2 1 .6l.4.8h5c.6 0 1 .4 1 1v5.7c0 .4-.3.7-.7.7h-9.6c-.4 0-.7-.3-.7-.7z" fill="url(#fg)" stroke="#d9b040" stroke-width="0.5"/><path d="M0.5 9.2h10.8M11.3 2.6v6.6" stroke="#7a6124" stroke-width="0.8" fill="none" opacity=".85"/></svg>
<span class="t tree" style="left:83.2px;top:435.18px;">Service Broker</span>
<svg style="left:54px;top:449px" width="9" height="9" viewBox="0 0 9 9"><rect x="1.5" y="1.5" width="6" height="6" fill="#fff" stroke="#8c8c8c" stroke-width="1"/><path d="M2.7 4.5h3.6M4.5 2.7v3.6" stroke="#000" stroke-width="1"/></svg>
<svg style="left:67px;top:447.76px" width="12" height="10" viewBox="0 0 12 10"><defs><linearGradient id="fg" x1="0" y1="0" x2="1" y2="1"><stop offset="0" stop-color="#fff6c0"/><stop offset="0.55" stop-color="#f6d560"/><stop offset="1" stop-color="#dfa826"/></linearGradient></defs><path d="M0.4 1.5c0-.6.4-1 1-1h2.6c.5 0 .8.2 1 .6l.4.8h5c.6 0 1 .4 1 1v5.7c0 .4-.3.7-.7.7h-9.6c-.4 0-.7-.3-.7-.7z" fill="url(#fg)" stroke="#d9b040" stroke-width="0.5"/><path d="M0.5 9.2h10.8M11.3 2.6v6.6" stroke="#7a6124" stroke-width="0.8" fill="none" opacity=".85"/></svg>
<span class="t cjk" style="left:83.4px;top:447.46px;color:#000;">存储</span>
<svg style="left:54px;top:461px" width="9" height="9" viewBox="0 0 9 9"><rect x="1.5" y="1.5" width="6" height="6" fill="#fff" stroke="#8c8c8c" stroke-width="1"/><path d="M2.7 4.5h3.6M4.5 2.7v3.6" stroke="#000" stroke-width="1"/></svg>
<svg style="left:67px;top:460.54px" width="12" height="10" viewBox="0 0 12 10"><defs><linearGradient id="fg" x1="0" y1="0" x2="1" y2="1"><stop offset="0" stop-color="#fff6c0"/><stop offset="0.55" stop-color="#f6d560"/><stop offset="1" stop-color="#dfa826"/></linearGradient></defs><path d="M0.4 1.5c0-.6.4-1 1-1h2.6c.5 0 .8.2 1 .6l.4.8h5c.6 0 1 .4 1 1v5.7c0 .4-.3.7-.7.7h-9.6c-.4 0-.7-.3-.7-.7z" fill="url(#fg)" stroke="#d9b040" stroke-width="0.5"/><path d="M0.5 9.2h10.8M11.3 2.6v6.6" stroke="#7a6124" stroke-width="0.8" fill="none" opacity=".85"/></svg>
<span class="t cjk" style="left:83.4px;top:460.24px;color:#000;">安全性</span>
<div style="left:0px;top:468px;width:825px;height:2px;background:#fff;"></div>
<div style="left:284.2px;top:2px;width:2.0px;height:466px;background:#9a9a98;"></div>
<div style="left:284.6px;top:2px;width:534.4px;height:1.2px;background:#858585;"></div>
<div style="left:818.2px;top:2px;width:0.9px;height:466px;background:#a4a4a4;"></div>
<div style="left:284px;top:467.2px;width:535px;height:0.8px;background:#a8a8a8;"></div>
<svg style="left:285px;top:3px" width="230" height="15" viewBox="0 0 230 15"><path d="M1.5 15.4L13.6 1.4H156.5V15.4z" fill="#fff"/><path d="M1.5 14.8L13.6 1.4H156.5" fill="none" stroke="#8b8983" stroke-width="1"/><path d="M156.7 1.4V14.6" stroke="#55534f" stroke-width="1.2"/></svg>
<div style="left:442px;top:17.2px;width:376.2px;height:1.1px;background:#8c8c8c;"></div>
<span class="t tab" style="left:298.6px;top:5.9px;">SQLQuery1.s...ator (74))*</span>
<svg style="left:785px;top:5px" width="32" height="11" viewBox="0 0 32 11"><path d="M7.3 4.6h6l-3 3.2z" fill="#000"/><path d="M21.4 2.7l6.6 6.2M28 2.7l-6.6 6.2" stroke="#000" stroke-width="1.7" fill="none"/></svg>
<div style="left:286px;top:18.2px;width:520px;height:221.5px;background:#fff;"></div>
<div style="left:286px;top:18.2px;width:14.2px;height:221.5px;background:#d5d2cb;"></div>
<div style="left:300.2px;top:18.2px;width:2.8px;height:53.9px;background:#fcf600;"></div>
<svg style="left:300px;top:18px" width="12" height="48" viewBox="0 0 12 48"><path d="M5 10.5v7M5 24v9.6h4" stroke="#808080" stroke-width="0.9" fill="none"/><rect x="1.7" y="4" width="6.6" height="6.6" fill="#fff" stroke="#808080" stroke-width="0.9"/><path d="M3.2 7.3h3.6" stroke="#404040" stroke-width="0.9"/><rect x="1.7" y="17.4" width="6.6" height="6.6" fill="#fff" stroke="#808080" stroke-width="0.9"/><path d="M3.2 20.7h3.6" stroke="#404040" stroke-width="0.9"/></svg>
<span class="t code" style="left:311.7px;top:19.2px;"><span style="color:#2020ff">use</span><span style="color:#1f9696"> [WSS_Content]</span></span>
<span class="t code" style="left:311.7px;top:32.5px;"><span style="color:#2020ff">select</span><span style="color:#858585"> *</span><span style="color:#2020ff"> from</span><span style="color:#1f9696"> dbo</span><span style="color:#858585">.</span><span style="color:#30e030">sysobjects</span></span>
<span class="t code" style="left:311.7px;top:45.8px;"><span style="color:#2020ff">where</span><span style="color:#1f9696"> name</span><span style="color:#858585"> like</span><span style="color:#f42424"> 'rbs%'</span></span>
<div style="left:806px;top:18.2px;width:12.2px;height:221.5px;background:#f1efeb;"></div>
<div style="left:806px;top:18.2px;width:12.2px;height:4.6px;background:#d5d2cb;box-sizing:border-box;border:1px solid;border-color:#fbfaf8 #424242 #424242 #fbfaf8;box-shadow:inset -1px -1px 0 #8a8780;"></div>
<div style="left:806px;top:23px;width:12.2px;height:12.6px;background:#d5d2cb;box-sizing:border-box;border:1px solid;border-color:#fbfaf8 #424242 #424242 #fbfaf8;box-shadow:inset -1px -1px 0 #8a8780;"></div>
<svg style="left:0;top:0" width="825" height="474"><path d="M808.9 30.7h6l-3-3.2z" fill="#000"/></svg>
<div style="left:806px;top:227.2px;width:12.2px;height:12.4px;background:#d5d2cb;box-sizing:border-box;border:1px solid;border-color:#fbfaf8 #424242 #424242 #fbfaf8;box-shadow:inset -1px -1px 0 #8a8780;"></div>
<svg style="left:0;top:0" width="825" height="474"><path d="M808.9 231.79999999999998h6l-3 3.2z" fill="#000"/></svg>
<div style="left:806px;top:35.8px;width:12.2px;height:159.8px;background:#d5d2cb;box-sizing:border-box;border:1px solid;border-color:#fbfaf8 #424242 #424242 #fbfaf8;box-shadow:inset -1px -1px 0 #8a8780;"></div>
<div style="left:286px;top:239.6px;width:520px;height:12.8px;background:#f1efeb;"></div>
<div style="left:286.4px;top:239.8px;width:12.4px;height:12.6px;background:#d5d2cb;box-sizing:border-box;border:1px solid;border-color:#fbfaf8 #424242 #424242 #fbfaf8;box-shadow:inset -1px -1px 0 #8a8780;"></div>
<svg style="left:0;top:0" width="825" height="474"><path d="M293.79999999999995 242.90000000000003v6.4l-3.2-3.2z" fill="#000"/></svg>
<div style="left:298.8px;top:239.8px;width:436px;height:12.6px;background:#d5d2cb;box-sizing:border-box;border:1px solid;border-color:#fbfaf8 #424242 #424242 #fbfaf8;box-shadow:inset -1px -1px 0 #8a8780;"></div>
<div style="left:793.6px;top:239.8px;width:12.4px;height:12.6px;background:#d5d2cb;box-sizing:border-box;border:1px solid;border-color:#fbfaf8 #424242 #424242 #fbfaf8;box-shadow:inset -1px -1px 0 #8a8780;"></div>
<svg style="left:0;top:0" width="825" height="474"><path d="M798.2 242.90000000000003v6.4l3.2-3.2z" fill="#000"/></svg>
<div style="left:806px;top:239.6px;width:12.2px;height:12.8px;background:#d5d2cb;"></div>
<div style="left:285.8px;top:252.4px;width:532.4px;height:1.2px;background:#55534f;"></div>
<div style="left:286.8px;top:257.1px;width:48.4px;height:18.9px;background:#d5d2cb;box-sizing:border-box;border-left:1px solid #fff;border-top:1px solid #fff;border-right:1.4px solid #55534f;border-radius:2px 2px 0 0;"></div>
<div style="left:335.4px;top:258.8px;width:44.8px;height:15.4px;background:#d5d2cb;box-sizing:border-box;border-top:1px solid #fff;border-right:1.4px solid #55534f;border-radius:2px 2px 0 0;"></div>
<svg style="left:292.6px;top:260px" width="12" height="11" viewBox="0 0 13 12"><rect x="0.4" y="0.4" width="12.2" height="10.8" rx="0.9" fill="#f6f8fd" stroke="#6a7fb4" stroke-width="0.8"/><path d="M0.7 1.4c0-.4.3-.7.7-.7h10.2c.4 0 .7.3.7.7v2.2h-11.6z" fill="#3e79e4"/><path d="M0.8 6h11.4M0.8 8.4h11.4M4.4 3.4v7.4M8.4 3.4v7.4" stroke="#9db4e2" stroke-width="0.8"/></svg>
<span class="t cjk" style="left:309.6px;top:260.2px;color:#000;">结果</span>
<svg style="left:340px;top:260px" width="13" height="13" viewBox="0 0 13 13"><path d="M0.6 0.8h4.6l1.8 1.8v9.4h-6.4z" fill="#fdfdff" stroke="#7488b6" stroke-width="0.8"/><rect x="1.5" y="3.2" width="2.2" height="8" fill="#3f70da"/><rect x="4.1" y="5" width="2" height="6.2" fill="#a9c4f0"/><path d="M6.3 7.2l2.2-1.6 3.2 3v3.6h-5.4z" fill="#eaa596" stroke="#b97c70" stroke-width="0.6"/></svg>
<span class="t cjk" style="left:355.6px;top:260.8px;color:#000;">消息</span>
<div style="left:285.8px;top:275.2px;width:532.4px;height:0.8px;background:#fff;opacity:.7"></div>
<div style="left:289.6px;top:275.8px;width:527.8px;height:191.2px;background:#fff;box-sizing:border-box;border:1.2px solid;border-color:#484848 #f6f5f3 #f6f5f3 #484848;border-right-width:3px;border-bottom-width:2.6px;"></div>
<div style="left:290.6px;top:276.8px;width:512.6px;height:175.8px;overflow:hidden;">
<div style="left:0.0px;top:-0.2px;width:24.8px;height:14.4px;background:#ded9d3;box-sizing:border-box;border:1px solid;border-color:#f7f5f2 #4e4d4b #4e4d4b #f7f5f2;border-right-width:1.6px;border-bottom-width:1.6px;"></div>
<div style="left:24.8px;top:-0.2px;width:103.2px;height:14.4px;background:#ded9d3;box-sizing:border-box;border:1px solid;border-color:#f7f5f2 #4e4d4b #4e4d4b #f7f5f2;border-right-width:1.6px;border-bottom-width:1.6px;"></div>
<span class="t grid" style="left:29.0px;top:2.7px;letter-spacing:-0.4px;">name</span>
<div style="left:128.0px;top:-0.2px;width:61.0px;height:14.4px;background:#ded9d3;box-sizing:border-box;border:1px solid;border-color:#f7f5f2 #4e4d4b #4e4d4b #f7f5f2;border-right-width:1.6px;border-bottom-width:1.6px;"></div>
<span class="t grid" style="left:132.2px;top:2.7px;letter-spacing:-0.4px;">id</span>
<div style="left:189.0px;top:-0.2px;width:31.0px;height:14.4px;background:#ded9d3;box-sizing:border-box;border:1px solid;border-color:#f7f5f2 #4e4d4b #4e4d4b #f7f5f2;border-right-width:1.6px;border-bottom-width:1.6px;"></div>
<span class="t grid" style="left:193.2px;top:2.7px;letter-spacing:-0.4px;">xtype</span>
<div style="left:220.0px;top:-0.2px;width:23.0px;height:14.4px;background:#ded9d3;box-sizing:border-box;border:1px solid;border-color:#f7f5f2 #4e4d4b #4e4d4b #f7f5f2;border-right-width:1.6px;border-bottom-width:1.6px;"></div>
<span class="t grid" style="left:224.2px;top:2.7px;letter-spacing:-0.4px;">uid</span>
<div style="left:243.0px;top:-0.2px;width:24.0px;height:14.4px;background:#ded9d3;box-sizing:border-box;border:1px solid;border-color:#f7f5f2 #4e4d4b #4e4d4b #f7f5f2;border-right-width:1.6px;border-bottom-width:1.6px;"></div>
<span class="t grid" style="left:247.2px;top:2.7px;letter-spacing:-0.4px;">info</span>
<div style="left:267.0px;top:-0.2px;width:33.6px;height:14.4px;background:#ded9d3;box-sizing:border-box;border:1px solid;border-color:#f7f5f2 #4e4d4b #4e4d4b #f7f5f2;border-right-width:1.6px;border-bottom-width:1.6px;"></div>
<span class="t grid" style="left:271.2px;top:2.7px;letter-spacing:-0.4px;">status</span>
<div style="left:300.6px;top:-0.2px;width:82.0px;height:14.4px;background:#ded9d3;box-sizing:border-box;border:1px solid;border-color:#f7f5f2 #4e4d4b #4e4d4b #f7f5f2;border-right-width:1.6px;border-bottom-width:1.6px;"></div>
<span class="t grid" style="left:304.8px;top:2.7px;letter-spacing:-0.4px;">base_schema_ver</span>
<div style="left:382.6px;top:-0.2px;width:38.8px;height:14.4px;background:#ded9d3;box-sizing:border-box;border:1px solid;border-color:#f7f5f2 #4e4d4b #4e4d4b #f7f5f2;border-right-width:1.6px;border-bottom-width:1.6px;"></div>
<span class="t grid" style="left:386.8px;top:2.7px;letter-spacing:-0.4px;">replinfo</span>
<div style="left:421.4px;top:-0.2px;width:52.6px;height:14.4px;background:#ded9d3;box-sizing:border-box;border:1px solid;border-color:#f7f5f2 #4e4d4b #4e4d4b #f7f5f2;border-right-width:1.6px;border-bottom-width:1.6px;"></div>
<span class="t grid" style="left:425.6px;top:2.7px;letter-spacing:-0.4px;">parent_obj</span>
<div style="left:474.0px;top:-0.2px;width:38.6px;height:14.4px;background:#ded9d3;box-sizing:border-box;border:1px solid;border-color:#f7f5f2 #4e4d4b #4e4d4b #f7f5f2;border-right-width:1.6px;border-bottom-width:1.6px;"></div>
<span class="t grid" style="left:478.2px;top:2.7px;letter-spacing:-0.4px;">crdate</span>
<div style="left:0.0px;top:14.3px;width:24.8px;height:14.6px;background:#ded9d3;box-sizing:border-box;border:1px solid;border-color:#f7f5f2 #4e4d4b #4e4d4b #f7f5f2;border-right-width:1.6px;border-bottom-width:1.6px;"></div>
<span class="t grid" style="left:4.8px;top:16.7px;font-size:10px;letter-spacing:-0.3px;">1</span>
<div style="left:24.8px;top:29.2px;width:488px;height:1px;background:#dedbd5;"></div>
<span class="t grid" style="left:31.2px;top:18.0px;letter-spacing:-0.42px;">rbs_all_counters</span>
<span class="t grid" style="left:134.4px;top:18.0px;letter-spacing:-0.3px;">1899869835</span>
<span class="t grid" style="left:195.4px;top:18.0px;letter-spacing:-0.3px;">V</span>
<span class="t grid" style="left:226.4px;top:18.0px;letter-spacing:-0.3px;">5</span>
<span class="t grid" style="left:249.4px;top:18.0px;letter-spacing:-0.3px;">0</span>
<span class="t grid" style="left:273.4px;top:18.0px;letter-spacing:-0.3px;">0</span>
<span class="t grid" style="left:307.0px;top:18.0px;letter-spacing:-0.3px;">0</span>
<span class="t grid" style="left:389.0px;top:18.0px;letter-spacing:-0.3px;">0</span>
<span class="t grid" style="left:427.8px;top:18.0px;letter-spacing:-0.3px;">0</span>
<span class="t grid" style="left:480.4px;top:18.0px;letter-spacing:-0.3px;">2010-03</span>
<div style="left:0.0px;top:29.5px;width:24.8px;height:14.6px;background:#ded9d3;box-sizing:border-box;border:1px solid;border-color:#f7f5f2 #4e4d4b #4e4d4b #f7f5f2;border-right-width:1.6px;border-bottom-width:1.6px;"></div>
<span class="t grid" style="left:4.8px;top:31.9px;font-size:10px;letter-spacing:-0.3px;">2</span>
<div style="left:24.8px;top:44.4px;width:488px;height:1px;background:#dedbd5;"></div>
<span class="t grid" style="left:31.2px;top:33.2px;letter-spacing:-0.42px;">rbs_all_history</span>
<span class="t grid" style="left:134.4px;top:33.2px;letter-spacing:-0.3px;">1931869949</span>
<span class="t grid" style="left:195.4px;top:33.2px;letter-spacing:-0.3px;">V</span>
<span class="t grid" style="left:226.4px;top:33.2px;letter-spacing:-0.3px;">5</span>
<span class="t grid" style="left:249.4px;top:33.2px;letter-spacing:-0.3px;">0</span>
<span class="t grid" style="left:273.4px;top:33.2px;letter-spacing:-0.3px;">0</span>
<span class="t grid" style="left:307.0px;top:33.2px;letter-spacing:-0.3px;">0</span>
<span class="t grid" style="left:389.0px;top:33.2px;letter-spacing:-0.3px;">0</span>
<span class="t grid" style="left:427.8px;top:33.2px;letter-spacing:-0.3px;">0</span>
<span class="t grid" style="left:480.4px;top:33.2px;letter-spacing:-0.3px;">2010-03</span>
<div style="left:0.0px;top:44.7px;width:24.8px;height:14.6px;background:#ded9d3;box-sizing:border-box;border:1px solid;border-color:#f7f5f2 #4e4d4b #4e4d4b #f7f5f2;border-right-width:1.6px;border-bottom-width:1.6px;"></div>
<span class="t grid" style="left:4.8px;top:47.1px;font-size:10px;letter-spacing:-0.3px;">3</span>
<div style="left:24.8px;top:59.6px;width:488px;height:1px;background:#dedbd5;"></div>
<span class="t grid" style="left:31.2px;top:48.4px;letter-spacing:-0.42px;">rbs_blob_details</span>
<span class="t grid" style="left:134.4px;top:48.4px;letter-spacing:-0.3px;">1835869607</span>
<span class="t grid" style="left:195.4px;top:48.4px;letter-spacing:-0.3px;">V</span>
<span class="t grid" style="left:226.4px;top:48.4px;letter-spacing:-0.3px;">6</span>
<span class="t grid" style="left:249.4px;top:48.4px;letter-spacing:-0.3px;">0</span>
<span class="t grid" style="left:273.4px;top:48.4px;letter-spacing:-0.3px;">0</span>
<span class="t grid" style="left:307.0px;top:48.4px;letter-spacing:-0.3px;">0</span>
<span class="t grid" style="left:389.0px;top:48.4px;letter-spacing:-0.3px;">0</span>
<span class="t grid" style="left:427.8px;top:48.4px;letter-spacing:-0.3px;">0</span>
<span class="t grid" style="left:480.4px;top:48.4px;letter-spacing:-0.3px;">2010-03</span>
<div style="left:0.0px;top:59.9px;width:24.8px;height:14.6px;background:#ded9d3;box-sizing:border-box;border:1px solid;border-color:#f7f5f2 #4e4d4b #4e4d4b #f7f5f2;border-right-width:1.6px;border-bottom-width:1.6px;"></div>
<span class="t grid" style="left:4.8px;top:62.3px;font-size:10px;letter-spacing:-0.3px;">4</span>
<div style="left:24.8px;top:74.8px;width:488px;height:1px;background:#dedbd5;"></div>
<span class="t grid" style="left:31.2px;top:63.6px;letter-spacing:-0.42px;">rbs_blob_references</span>
<span class="t grid" style="left:134.4px;top:63.6px;letter-spacing:-0.3px;">1851869664</span>
<span class="t grid" style="left:195.4px;top:63.6px;letter-spacing:-0.3px;">V</span>
<span class="t grid" style="left:226.4px;top:63.6px;letter-spacing:-0.3px;">6</span>
<span class="t grid" style="left:249.4px;top:63.6px;letter-spacing:-0.3px;">0</span>
<span class="t grid" style="left:273.4px;top:63.6px;letter-spacing:-0.3px;">0</span>
<span class="t grid" style="left:307.0px;top:63.6px;letter-spacing:-0.3px;">0</span>
<span class="t grid" style="left:389.0px;top:63.6px;letter-spacing:-0.3px;">0</span>
<span class="t grid" style="left:427.8px;top:63.6px;letter-spacing:-0.3px;">0</span>
<span class="t grid" style="left:480.4px;top:63.6px;letter-spacing:-0.3px;">2010-03</span>
<div style="left:0.0px;top:75.1px;width:24.8px;height:14.6px;background:#ded9d3;box-sizing:border-box;border:1px solid;border-color:#f7f5f2 #4e4d4b #4e4d4b #f7f5f2;border-right-width:1.6px;border-bottom-width:1.6px;"></div>
<span class="t grid" style="left:4.8px;top:77.5px;font-size:10px;letter-spacing:-0.3px;">5</span>
<div style="left:24.8px;top:90.0px;width:488px;height:1px;background:#dedbd5;"></div>
<span class="t grid" style="left:31.2px;top:78.8px;letter-spacing:-0.42px;">rbs_blob_stores</span>
<span class="t grid" style="left:134.4px;top:78.8px;letter-spacing:-0.3px;">1787869436</span>
<span class="t grid" style="left:195.4px;top:78.8px;letter-spacing:-0.3px;">V</span>
<span class="t grid" style="left:226.4px;top:78.8px;letter-spacing:-0.3px;">6</span>
<span class="t grid" style="left:249.4px;top:78.8px;letter-spacing:-0.3px;">0</span>
<span class="t grid" style="left:273.4px;top:78.8px;letter-spacing:-0.3px;">0</span>
<span class="t grid" style="left:307.0px;top:78.8px;letter-spacing:-0.3px;">0</span>
<span class="t grid" style="left:389.0px;top:78.8px;letter-spacing:-0.3px;">0</span>
<span class="t grid" style="left:427.8px;top:78.8px;letter-spacing:-0.3px;">0</span>
<span class="t grid" style="left:480.4px;top:78.8px;letter-spacing:-0.3px;">2010-03</span>
<div style="left:0.0px;top:90.3px;width:24.8px;height:14.6px;background:#ded9d3;box-sizing:border-box;border:1px solid;border-color:#f7f5f2 #4e4d4b #4e4d4b #f7f5f2;border-right-width:1.6px;border-bottom-width:1.6px;"></div>
<span class="t grid" style="left:4.8px;top:92.7px;font-size:10px;letter-spacing:-0.3px;">6</span>
<div style="left:24.8px;top:105.2px;width:488px;height:1px;background:#dedbd5;"></div>
<span class="t grid" style="left:31.2px;top:94.0px;letter-spacing:-0.42px;">rbs_collections</span>
<span class="t grid" style="left:134.4px;top:94.0px;letter-spacing:-0.3px;">1803869493</span>
<span class="t grid" style="left:195.4px;top:94.0px;letter-spacing:-0.3px;">V</span>
<span class="t grid" style="left:226.4px;top:94.0px;letter-spacing:-0.3px;">6</span>
<span class="t grid" style="left:249.4px;top:94.0px;letter-spacing:-0.3px;">0</span>
<span class="t grid" style="left:273.4px;top:94.0px;letter-spacing:-0.3px;">0</span>
<span class="t grid" style="left:307.0px;top:94.0px;letter-spacing:-0.3px;">0</span>
<span class="t grid" style="left:389.0px;top:94.0px;letter-spacing:-0.3px;">0</span>
<span class="t grid" style="left:427.8px;top:94.0px;letter-spacing:-0.3px;">0</span>
<span class="t grid" style="left:480.4px;top:94.0px;letter-spacing:-0.3px;">2010-03</span>
<div style="left:0.0px;top:105.5px;width:24.8px;height:14.6px;background:#ded9d3;box-sizing:border-box;border:1px solid;border-color:#f7f5f2 #4e4d4b #4e4d4b #f7f5f2;border-right-width:1.6px;border-bottom-width:1.6px;"></div>
<span class="t grid" style="left:4.8px;top:107.9px;font-size:10px;letter-spacing:-0.3px;">7</span>
<div style="left:24.8px;top:120.4px;width:488px;height:1px;background:#dedbd5;"></div>
<span class="t grid" style="left:31.2px;top:109.2px;letter-spacing:-0.42px;">rbs_columns</span>
<span class="t grid" style="left:134.4px;top:109.2px;letter-spacing:-0.3px;">1883869778</span>
<span class="t grid" style="left:195.4px;top:109.2px;letter-spacing:-0.3px;">V</span>
<span class="t grid" style="left:226.4px;top:109.2px;letter-spacing:-0.3px;">6</span>
<span class="t grid" style="left:249.4px;top:109.2px;letter-spacing:-0.3px;">0</span>
<span class="t grid" style="left:273.4px;top:109.2px;letter-spacing:-0.3px;">0</span>
<span class="t grid" style="left:307.0px;top:109.2px;letter-spacing:-0.3px;">0</span>
<span class="t grid" style="left:389.0px;top:109.2px;letter-spacing:-0.3px;">0</span>
<span class="t grid" style="left:427.8px;top:109.2px;letter-spacing:-0.3px;">0</span>
<span class="t grid" style="left:480.4px;top:109.2px;letter-spacing:-0.3px;">2010-03</span>
<div style="left:0.0px;top:120.7px;width:24.8px;height:14.6px;background:#ded9d3;box-sizing:border-box;border:1px solid;border-color:#f7f5f2 #4e4d4b #4e4d4b #f7f5f2;border-right-width:1.6px;border-bottom-width:1.6px;"></div>
<span class="t grid" style="left:4.8px;top:123.1px;font-size:10px;letter-spacing:-0.3px;">8</span>
<div style="left:24.8px;top:135.6px;width:488px;height:1px;background:#dedbd5;"></div>
<span class="t grid" style="left:31.2px;top:124.4px;letter-spacing:-0.42px;">rbs_config</span>
<span class="t grid" style="left:134.4px;top:124.4px;letter-spacing:-0.3px;">1867869721</span>
<span class="t grid" style="left:195.4px;top:124.4px;letter-spacing:-0.3px;">V</span>
<span class="t grid" style="left:226.4px;top:124.4px;letter-spacing:-0.3px;">6</span>
<span class="t grid" style="left:249.4px;top:124.4px;letter-spacing:-0.3px;">0</span>
<span class="t grid" style="left:273.4px;top:124.4px;letter-spacing:-0.3px;">0</span>
<span class="t grid" style="left:307.0px;top:124.4px;letter-spacing:-0.3px;">0</span>
<span class="t grid" style="left:389.0px;top:124.4px;letter-spacing:-0.3px;">0</span>
<span class="t grid" style="left:427.8px;top:124.4px;letter-spacing:-0.3px;">0</span>
<span class="t grid" style="left:480.4px;top:124.4px;letter-spacing:-0.3px;">2010-03</span>
<div style="left:0.0px;top:135.9px;width:24.8px;height:14.6px;background:#ded9d3;box-sizing:border-box;border:1px solid;border-color:#f7f5f2 #4e4d4b #4e4d4b #f7f5f2;border-right-width:1.6px;border-bottom-width:1.6px;"></div>
<span class="t grid" style="left:4.8px;top:138.3px;font-size:10px;letter-spacing:-0.3px;">9</span>
<div style="left:24.8px;top:150.8px;width:488px;height:1px;background:#dedbd5;"></div>
<span class="t grid" style="left:31.2px;top:139.6px;letter-spacing:-0.42px;">rbs_consistency_issues</span>
<span class="t grid" style="left:134.4px;top:139.6px;letter-spacing:-0.3px;">1963870063</span>
<span class="t grid" style="left:195.4px;top:139.6px;letter-spacing:-0.3px;">V</span>
<span class="t grid" style="left:226.4px;top:139.6px;letter-spacing:-0.3px;">6</span>
<span class="t grid" style="left:249.4px;top:139.6px;letter-spacing:-0.3px;">0</span>
<span class="t grid" style="left:273.4px;top:139.6px;letter-spacing:-0.3px;">0</span>
<span class="t grid" style="left:307.0px;top:139.6px;letter-spacing:-0.3px;">0</span>
<span class="t grid" style="left:389.0px;top:139.6px;letter-spacing:-0.3px;">0</span>
<span class="t grid" style="left:427.8px;top:139.6px;letter-spacing:-0.3px;">0</span>
<span class="t grid" style="left:480.4px;top:139.6px;letter-spacing:-0.3px;">2010-03</span>
<div style="left:0.0px;top:151.1px;width:24.8px;height:14.6px;background:#ded9d3;box-sizing:border-box;border:1px solid;border-color:#f7f5f2 #4e4d4b #4e4d4b #f7f5f2;border-right-width:1.6px;border-bottom-width:1.6px;"></div>
<span class="t grid" style="left:4.8px;top:153.5px;font-size:10px;letter-spacing:-0.3px;">10</span>
<div style="left:24.8px;top:166.0px;width:488px;height:1px;background:#dedbd5;"></div>
<span class="t grid" style="left:31.2px;top:154.8px;letter-spacing:-0.42px;">rbs_counters</span>
<span class="t grid" style="left:134.4px;top:154.8px;letter-spacing:-0.3px;">1915869892</span>
<span class="t grid" style="left:195.4px;top:154.8px;letter-spacing:-0.3px;">V</span>
<span class="t grid" style="left:226.4px;top:154.8px;letter-spacing:-0.3px;">6</span>
<span class="t grid" style="left:249.4px;top:154.8px;letter-spacing:-0.3px;">0</span>
<span class="t grid" style="left:273.4px;top:154.8px;letter-spacing:-0.3px;">0</span>
<span class="t grid" style="left:307.0px;top:154.8px;letter-spacing:-0.3px;">0</span>
<span class="t grid" style="left:389.0px;top:154.8px;letter-spacing:-0.3px;">0</span>
<span class="t grid" style="left:427.8px;top:154.8px;letter-spacing:-0.3px;">0</span>
<span class="t grid" style="left:480.4px;top:154.8px;letter-spacing:-0.3px;">2010-03</span>
<div style="left:0.0px;top:166.3px;width:24.8px;height:14.6px;background:#ded9d3;box-sizing:border-box;border:1px solid;border-color:#f7f5f2 #4e4d4b #4e4d4b #f7f5f2;border-right-width:1.6px;border-bottom-width:1.6px;"></div>
<span class="t grid" style="left:4.8px;top:168.7px;font-size:10px;letter-spacing:-0.3px;">11</span>
<div style="left:24.8px;top:181.2px;width:488px;height:1px;background:#dedbd5;"></div>
<span class="t grid" style="left:31.2px;top:170.0px;letter-spacing:-0.42px;">rbs_dictionary</span>
<span class="t grid" style="left:134.4px;top:170.0px;letter-spacing:-0.3px;">1979870120</span>
<span class="t grid" style="left:195.4px;top:170.0px;letter-spacing:-0.3px;">V</span>
<span class="t grid" style="left:226.4px;top:170.0px;letter-spacing:-0.3px;">6</span>
<span class="t grid" style="left:249.4px;top:170.0px;letter-spacing:-0.3px;">0</span>
<span class="t grid" style="left:273.4px;top:170.0px;letter-spacing:-0.3px;">0</span>
<span class="t grid" style="left:307.0px;top:170.0px;letter-spacing:-0.3px;">0</span>
<span class="t grid" style="left:389.0px;top:170.0px;letter-spacing:-0.3px;">0</span>
<span class="t grid" style="left:427.8px;top:170.0px;letter-spacing:-0.3px;">0</span>
<span class="t grid" style="left:480.4px;top:170.0px;letter-spacing:-0.3px;">2010-03</span>
<div style="left:127.0px;top:14.3px;width:1px;height:170px;background:#dedbd5;"></div>
<div style="left:188.0px;top:14.3px;width:1px;height:170px;background:#dedbd5;"></div>
<div style="left:219.0px;top:14.3px;width:1px;height:170px;background:#dedbd5;"></div>
<div style="left:242.0px;top:14.3px;width:1px;height:170px;background:#dedbd5;"></div>
<div style="left:266.0px;top:14.3px;width:1px;height:170px;background:#dedbd5;"></div>
<div style="left:299.6px;top:14.3px;width:1px;height:170px;background:#dedbd5;"></div>
<div style="left:381.6px;top:14.3px;width:1px;height:170px;background:#dedbd5;"></div>
<div style="left:420.4px;top:14.3px;width:1px;height:170px;background:#dedbd5;"></div>
<div style="left:473.0px;top:14.3px;width:1px;height:170px;background:#dedbd5;"></div>
<div style="left:511.6px;top:14.3px;width:1px;height:170px;background:#dedbd5;"></div>
<div style="left:25.4px;top:14.8px;width:102px;height:13.8px;background:#dcdbe4;box-sizing:border-box;border:1px dotted #7a7a7a;"></div>
<span class="t grid" style="left:31.2px;top:18.0px;letter-spacing:-0.42px;">rbs_all_counters</span>
</div>
<div style="left:802.4px;top:277px;width:12px;height:176px;background:#f1efeb;"></div>
<div style="left:802.6px;top:277px;width:11.8px;height:12.2px;background:#d5d2cb;box-sizing:border-box;border:1px solid;border-color:#fbfaf8 #424242 #424242 #fbfaf8;box-shadow:inset -1px -1px 0 #8a8780;"></div>
<svg style="left:0;top:0" width="825" height="474"><path d="M805.3 284.5h6l-3-3.2z" fill="#000"/></svg>
<div style="left:802.6px;top:289.5px;width:11.8px;height:7.8px;background:#d5d2cb;box-sizing:border-box;border:1px solid;border-color:#fbfaf8 #424242 #424242 #fbfaf8;box-shadow:inset -1px -1px 0 #8a8780;"></div>
<div style="left:802.6px;top:440.6px;width:11.8px;height:12.2px;background:#d5d2cb;box-sizing:border-box;border:1px solid;border-color:#fbfaf8 #424242 #424242 #fbfaf8;box-shadow:inset -1px -1px 0 #8a8780;"></div>
<svg style="left:0;top:0" width="825" height="474"><path d="M805.3 445.1h6l-3 3.2z" fill="#000"/></svg>
<div style="left:290.8px;top:452.8px;width:511.8px;height:11.8px;background:#f1efeb;"></div>
<div style="left:290.8px;top:452.8px;width:11.6px;height:11.8px;background:#d5d2cb;box-sizing:border-box;border:1px solid;border-color:#fbfaf8 #424242 #424242 #fbfaf8;box-shadow:inset -1px -1px 0 #8a8780;"></div>
<svg style="left:0;top:0" width="825" height="474"><path d="M297.8 455.5v6.4l-3.2-3.2z" fill="#000"/></svg>
<div style="left:302.4px;top:452.8px;width:189.6px;height:11.8px;background:#d5d2cb;box-sizing:border-box;border:1px solid;border-color:#fbfaf8 #424242 #424242 #fbfaf8;box-shadow:inset -1px -1px 0 #8a8780;"></div>
<div style="left:790.4px;top:452.8px;width:12.2px;height:11.8px;background:#d5d2cb;box-sizing:border-box;border:1px solid;border-color:#fbfaf8 #424242 #424242 #fbfaf8;box-shadow:inset -1px -1px 0 #8a8780;"></div>
<svg style="left:0;top:0" width="825" height="474"><path d="M794.9 455.5v6.4l3.2-3.2z" fill="#000"/></svg>
<div style="left:802.4px;top:452.8px;width:12px;height:11.8px;background:#d5d2cb;"></div>
<span class="t wm1" style="left:692.8px;top:410.6px;">51CTO.com</span>
<div style="left:692px;top:440.6px;width:123px;height:1.5px;background:#5f5f5f;opacity:.85"></div>
<span class="t wm2" style="left:692px;top:444px;">技术博客</span>
<span class="t wm3" style="left:785px;top:445.6px;">Blog</span>
<svg style="left:715px;top:422px" width="60" height="50" viewBox="0 0 60 50"><path d="M33 6A20.5 20.5 0 1 0 29 46A20 20 0 0 1 33 6z" fill="#1c84d8" opacity=".92"/><path d="M35 11.5A15.4 15.4 0 1 0 33 41.5A15 15 0 0 1 35 11.5z" fill="#4fb0ee" opacity=".88"/></svg>
<span class="t wm4" style="left:762px;top:431.6px;">运维网</span>
<span class="t wm5" style="left:745px;top:449.4px;">iyunv.com</span>
</div></body></html>
